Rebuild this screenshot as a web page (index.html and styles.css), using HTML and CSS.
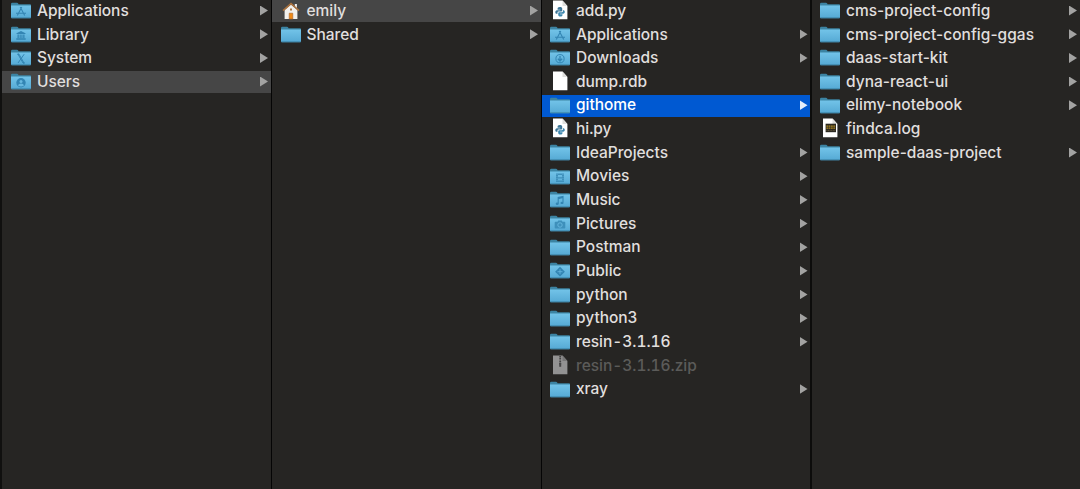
FILE: index.html
```html
<!DOCTYPE html>
<html lang="en">
<head>
<meta charset="utf-8">
<title>Users</title>
<link rel="stylesheet" href="styles.css">
</head>
<body>
<svg class="defs" aria-hidden="true">
  <defs>
    <linearGradient id="face" x1="0" y1="0" x2="0" y2="1"><stop offset="0" stop-color="#72c3e8"/><stop offset="1" stop-color="#55a9d4"/></linearGradient>
    <symbol id="folder" viewBox="0 0 20 20">
      <path d="M0 4.2Q0 2.8 1.2 2.8H6Q6.8 2.8 7.2 3.6L7.6 4.2H19Q20 4.2 20 5V8H0Z" fill="#3c84a3"/>
      <path d="M0 5.6H20V17.3Q20 18.2 19 18.2H1Q0 18.2 0 17.3Z" fill="url(#face)"/>
      <path d="M0.3 17.8H19.7" stroke="#397e9f" stroke-width=".8"/>
    </symbol>
    <symbol id="g-apps" viewBox="0 0 20 20"><path d="M10.8 7L6.3 15.6M9.2 7L13.7 15.6M5 13.2H15" fill="none" stroke="#3385b3" stroke-width="1.1"/></symbol>
    <symbol id="g-library" viewBox="0 0 20 20"><path d="M5.5 9.3L10 7L14.5 9.3V10H5.5ZM6.5 10.5H7.8V14H6.5ZM8.6 10.5H9.7V14H8.6ZM10.4 10.5H11.5V14H10.4ZM12.2 10.5H13.5V14H12.2ZM5.3 14.2H14.7V15.7H5.3Z" fill="#3385b3"/></symbol>
    <symbol id="g-system" viewBox="0 0 20 20"><path d="M7 7.2H8L13 16H12ZM13.2 7.2L7 16M6.2 7.2H8.2M12 16H14" fill="none" stroke="#3385b3" stroke-width="1"/></symbol>
    <symbol id="g-users" viewBox="0 0 20 20"><circle cx="10" cy="11.7" r="4.7" fill="#3385b3"/><circle cx="10" cy="10.4" r="1.5" fill="#68b8df"/><path d="M7 14.5Q7.5 12.5 10 12.5T13 14.5Q10 16.6 7 14.5Z" fill="#68b8df"/></symbol>
    <symbol id="g-down" viewBox="0 0 20 20"><circle cx="10" cy="11.7" r="4.1" fill="none" stroke="#3385b3"/><path d="M10 9V13.6M7.9 11.8L10 14L12.1 11.8" fill="none" stroke="#3385b3" stroke-width="1.3"/></symbol>
    <symbol id="g-movies" viewBox="0 0 20 20"><path d="M6 7.5H14V16H6ZM8 9V11.2H12V9ZM8 12.4V14.6H12V12.4Z" fill="#3e90bb" fill-rule="evenodd"/><path d="M7 8V16M13 8V16" stroke="#63b2da" stroke-width=".7" stroke-dasharray="1 1"/></symbol>
    <symbol id="g-music" viewBox="0 0 20 20"><path d="M8.2 14.5V8.5L13 7.4V13.6M8.2 9.6L13 8.5" fill="none" stroke="#3385b3" stroke-width="1.1"/><ellipse cx="7.2" cy="14.8" rx="1.5" ry="1.2" fill="#3385b3"/><ellipse cx="12" cy="13.9" rx="1.5" ry="1.2" fill="#3385b3"/></symbol>
    <symbol id="g-pictures" viewBox="0 0 20 20"><path d="M5.5 8.8H7.5L8.3 7.6H11.7L12.5 8.8H14.5Q15.3 8.8 15.3 9.6V14.8Q15.3 15.6 14.5 15.6H5.5Q4.7 15.6 4.7 14.8V9.6Q4.7 8.8 5.5 8.8Z" fill="#3e90bb"/><circle cx="10" cy="12" r="2.2" fill="none" stroke="#68b8df" stroke-width=".9"/></symbol>
    <symbol id="g-public" viewBox="0 0 20 20"><path d="M10 6.8L14.9 11.7L10 16.6L5.1 11.7Z" fill="#3385b3"/><path d="M10 9.2V14.2M7.5 11.7H12.5" stroke="#68b8df" stroke-width=".8"/></symbol>
    <symbol id="page" viewBox="0 0 20 20"><path d="M3 .6H12.5L17.4 6V19.2H3Z" fill="#fff"/><path d="M12.5 .6V6H17.4Z" fill="#dededc"/></symbol>
    <symbol id="g-python" viewBox="0 0 20 20"><path d="M9.9 7C8 7 7.6 7.8 7.6 8.6V9.8H10.2V10.2H7C5.8 10.2 5.3 11.2 5.3 12.2S5.9 13.8 7 13.8H7.5V12.6Q7.5 11.6 8.6 11.6H11.2Q12.2 11.6 12.2 10.6V8.6C12.2 7.7 11.5 7 9.9 7Z" fill="#3c7596"/><path d="M10.3 16.6C12 16.6 12.5 15.9 12.5 15.1V14.2H10V13.8H13.1C14.4 13.8 14.8 12.7 14.8 11.8S14.2 10.2 13.2 10.2H12.9V11.5Q12.9 12.3 11.9 12.3H9.2Q8.2 12.3 8.2 13.3V15.1C8.2 16 8.9 16.6 10.3 16.6Z" fill="#3d87ae"/></symbol>
    <symbol id="home" viewBox="0 0 20 20"><path d="M3.6 10L10 4.5L16.4 10V19H3.6Z" fill="#f2f0ed"/><path d="M13.8 4H15.9V8H13.8Z" fill="#eee"/><path d="M2 10.6L10 3.6L18 10.6" fill="none" stroke="#a9713e" stroke-width="1.5"/><path d="M8.2 13.2H11.8V19H8.2Z" fill="#f08a16" stroke="#a9652b" stroke-width=".6"/><path d="M9 8.4H11V10.4H9Z" fill="#a77748"/></symbol>
    <symbol id="log" viewBox="0 0 20 20"><path d="M3 .6H12.5L17.4 6V19.2H3Z" fill="#fff"/><path d="M12.5 .6V6H17.4Z" fill="#dededc"/><path d="M5.6 5.7H16V14.2H5.6Z" fill="#2b2820"/><path d="M6.4 8.2H15.2M6.4 10.2H15.2" stroke="#ad8820" stroke-width="1.3" stroke-dasharray="1.8 .5"/><path d="M6.4 12.5H15.2" stroke="#6d6041" stroke-width=".7" stroke-dasharray="1 .6"/></symbol>
    <symbol id="zip" viewBox="0 0 20 20"><path d="M3 .6H12.5L17.4 6V19.2H3Z" fill="#929292"/><path d="M12.5 .6V6H17.4Z" fill="#777"/><path d="M10.2 1V10" stroke="#444" stroke-width="1.8" stroke-dasharray="1.2 .5"/><path d="M9.2 8H11.2V11.8H9.2Z" fill="#454545"/></symbol>
  </defs>
</svg>
<main class="browser">
  <ul class="column column-root">
    <li class="row branch"><svg class="icon"><use href="#folder"/><use href="#g-apps"/></svg><span class="name">Applications</span></li>
    <li class="row branch"><svg class="icon"><use href="#folder"/><use href="#g-library"/></svg><span class="name">Library</span></li>
    <li class="row branch"><svg class="icon"><use href="#folder"/><use href="#g-system"/></svg><span class="name">System</span></li>
    <li class="row branch open"><svg class="icon"><use href="#folder"/><use href="#g-users"/></svg><span class="name">Users</span></li>
  </ul>
  <ul class="column column-users">
    <li class="row branch open"><svg class="icon"><use href="#home"/></svg><span class="name">emily</span></li>
    <li class="row branch"><svg class="icon"><use href="#folder"/></svg><span class="name">Shared</span></li>
  </ul>
  <ul class="column column-home">
    <li class="row"><svg class="icon"><use href="#page"/><use href="#g-python"/></svg><span class="name">add.py</span></li>
    <li class="row branch"><svg class="icon"><use href="#folder"/><use href="#g-apps"/></svg><span class="name">Applications</span></li>
    <li class="row branch"><svg class="icon"><use href="#folder"/><use href="#g-down"/></svg><span class="name">Downloads</span></li>
    <li class="row"><svg class="icon"><use href="#page"/></svg><span class="name">dump.rdb</span></li>
    <li class="row branch selected"><svg class="icon"><use href="#folder"/></svg><span class="name">githome</span></li>
    <li class="row"><svg class="icon"><use href="#page"/><use href="#g-python"/></svg><span class="name">hi.py</span></li>
    <li class="row branch"><svg class="icon"><use href="#folder"/></svg><span class="name">IdeaProjects</span></li>
    <li class="row branch"><svg class="icon"><use href="#folder"/><use href="#g-movies"/></svg><span class="name">Movies</span></li>
    <li class="row branch"><svg class="icon"><use href="#folder"/><use href="#g-music"/></svg><span class="name">Music</span></li>
    <li class="row branch"><svg class="icon"><use href="#folder"/><use href="#g-pictures"/></svg><span class="name">Pictures</span></li>
    <li class="row branch"><svg class="icon"><use href="#folder"/></svg><span class="name">Postman</span></li>
    <li class="row branch"><svg class="icon"><use href="#folder"/><use href="#g-public"/></svg><span class="name">Public</span></li>
    <li class="row branch"><svg class="icon"><use href="#folder"/></svg><span class="name">python</span></li>
    <li class="row branch"><svg class="icon"><use href="#folder"/></svg><span class="name">python3</span></li>
    <li class="row branch"><svg class="icon"><use href="#folder"/></svg><span class="name">resin-3.1.16</span></li>
    <li class="row dimmed"><svg class="icon"><use href="#zip"/></svg><span class="name">resin-3.1.16.zip</span></li>
    <li class="row branch"><svg class="icon"><use href="#folder"/></svg><span class="name">xray</span></li>
  </ul>
  <ul class="column column-project">
    <li class="row branch"><svg class="icon"><use href="#folder"/></svg><span class="name">cms-project-config</span></li>
    <li class="row branch"><svg class="icon"><use href="#folder"/></svg><span class="name">cms-project-config-ggas</span></li>
    <li class="row branch"><svg class="icon"><use href="#folder"/></svg><span class="name">daas-start-kit</span></li>
    <li class="row branch"><svg class="icon"><use href="#folder"/></svg><span class="name">dyna-react-ui</span></li>
    <li class="row branch"><svg class="icon"><use href="#folder"/></svg><span class="name">elimy-notebook</span></li>
    <li class="row"><svg class="icon"><use href="#log"/></svg><span class="name">findca.log</span></li>
    <li class="row branch"><svg class="icon"><use href="#folder"/></svg><span class="name">sample-daas-project</span></li>
  </ul>
</main>
</body>
</html>
```
FILE: styles.css
```css
* { box-sizing: border-box; }
body {
  margin: 0;
  background: #262523;
  color: #e0dfde;
  font: 500 15.5px/22px Inter, "Liberation Sans", sans-serif;
  overflow: hidden;
}
/* Symbol sheet takes no room but stays rendered so gradients resolve */
.defs { position: absolute; width: 0; height: 0; }
.browser {
  display: grid;
  grid-template-columns: 270px 270px 269.5px 268.5px;
  height: 489px;
  border-left: 2px solid #10100f;
}
.column {
  display: flex;
  flex-direction: column;
  gap: 1.37px;
  margin: 0;
  padding: 0;
  list-style: none;
  border-right: 1px solid #050505;
}
.column-home { border-right: 2px solid #0c0c0b; font-variant-numeric: tabular-nums; }
.column-project { border-right: 0; }
.row {
  display: flex;
  align-items: center;
  height: 22.3px;
  flex: none;
  padding: 0 3px 0.6px 9px;
}
.column-home .row { padding-left: 8px; padding-right: 2px; }
.column-users .row, .column-project .row { padding-left: 8.5px; }
.icon { width: 20px; height: 20px; margin: 0 6px 1.6px 0; flex: none; }
.name { flex: 1; letter-spacing: -0.03px; white-space: nowrap; }
.column-project .name { letter-spacing: 0.02px; }
.branch::after {
  content: "";
  width: 8px;
  height: 10px;
  margin-bottom: 0.5px;
  background: #a3a3a2;
  clip-path: polygon(0 0, 100% 50%, 0 100%);
}
.open { background: #464646; }
.selected { background: #0059d2; color: #fff; }
.selected::after { background: #e4edfa; }
.dimmed { color: #5b5b59; }
```
